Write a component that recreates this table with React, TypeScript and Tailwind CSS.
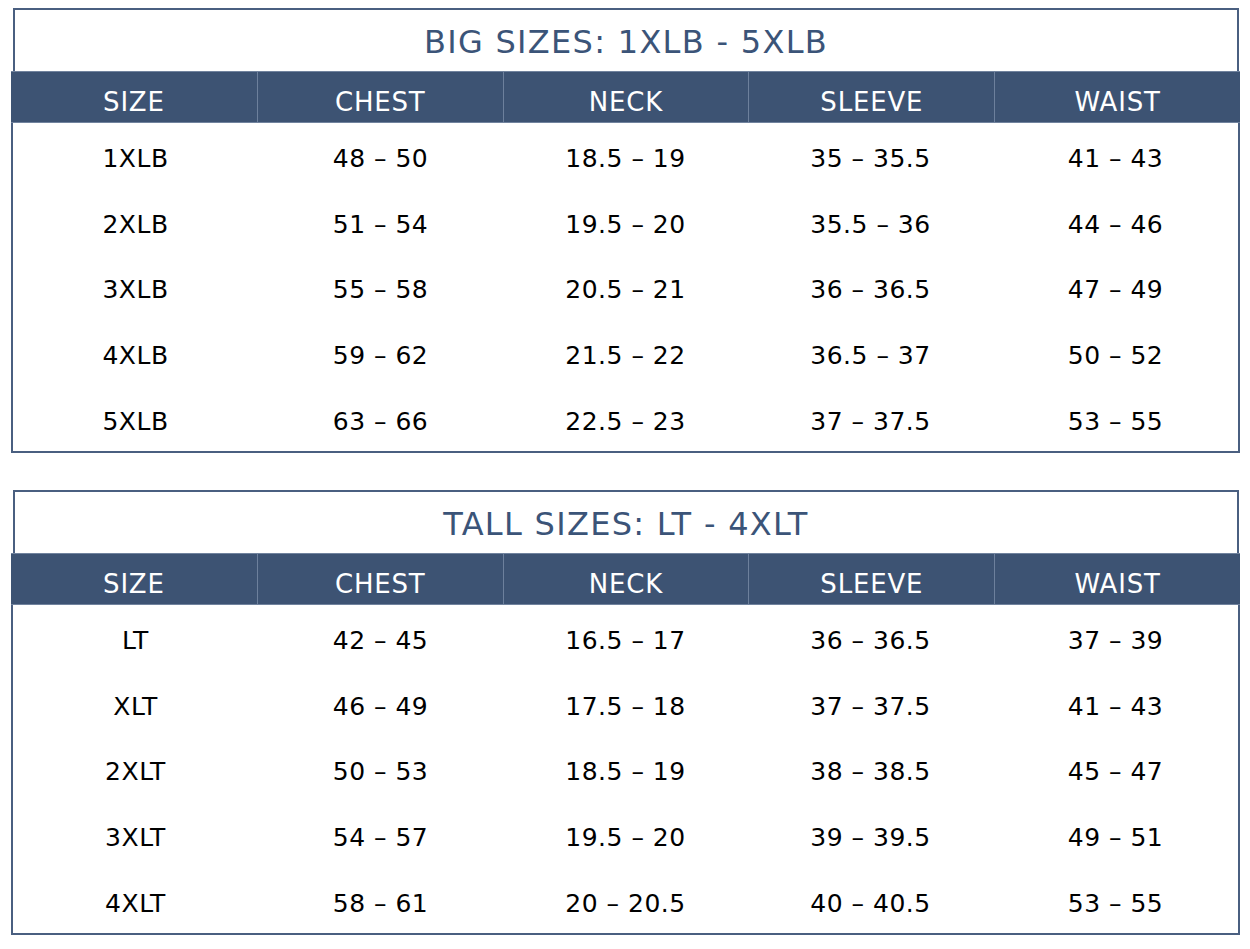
import React from "react";

type Row = [string, string, string, string, string];

const big: Row[] = [
  ["1XLB", "48 – 50", "18.5 – 19", "35 – 35.5", "41 – 43"],
  ["2XLB", "51 – 54", "19.5 – 20", "35.5 – 36", "44 – 46"],
  ["3XLB", "55 – 58", "20.5 – 21", "36 – 36.5", "47 – 49"],
  ["4XLB", "59 – 62", "21.5 – 22", "36.5 – 37", "50 – 52"],
  ["5XLB", "63 – 66", "22.5 – 23", "37 – 37.5", "53 – 55"],
];

const tall: Row[] = [
  ["LT", "42 – 45", "16.5 – 17", "36 – 36.5", "37 – 39"],
  ["XLT", "46 – 49", "17.5 – 18", "37 – 37.5", "41 – 43"],
  ["2XLT", "50 – 53", "18.5 – 19", "38 – 38.5", "45 – 47"],
  ["3XLT", "54 – 57", "19.5 – 20", "39 – 39.5", "49 – 51"],
  ["4XLT", "58 – 61", "20 – 20.5", "40 – 40.5", "53 – 55"],
];

const heads = ["SIZE", "CHEST", "NECK", "SLEEVE", "WAIST"];

function SizeTable({ title, rows }: { title: string; rows: Row[] }) {
  return (
    <div className="flex flex-col">
      <div className="ml-[13px] mr-[11px] h-[63px] border-t-2 border-x-2 border-[#4a5f80] flex items-center justify-center">
        <span className="text-[32px] tracking-[1.3px] text-[#3b5478] leading-none pt-[2px]">{title}</span>
      </div>
      <div className="ml-[11px] mr-[10px] h-[52px] bg-[#3d5373] border-y border-[#71839e] grid grid-cols-5">
        {heads.map((h, i) => (
          <div
            key={h}
            className={
              i === 0
                ? "flex items-center justify-center pt-[9px] text-white text-[26px] tracking-[0.8px] leading-none"
                : "flex items-center justify-center pt-[9px] text-white text-[26px] tracking-[0.8px] leading-none border-l border-[#6d809c]"
            }
          >
            {h}
          </div>
        ))}
      </div>
      <div className="ml-[11px] mr-[10px] h-[330px] border-x-2 border-b-2 border-[#4a5f80] grid grid-rows-5">
        {rows.map((r, ri) => (
          <div key={ri} className="grid grid-cols-5">
            {r.map((c, ci) => (
              <div
                key={ci}
                className="flex items-center justify-center pt-[6px] text-black text-[25px] tracking-[0.5px] leading-none"
              >
                {c}
              </div>
            ))}
          </div>
        ))}
      </div>
    </div>
  );
}

export default function App() {
  return (
    <div
      className="w-[1250px] h-[949px] bg-white pt-[8px] flex flex-col gap-[37px]"
      style={{ fontFamily: "'DejaVu Sans', Verdana, sans-serif" }}
    >
      <SizeTable title="BIG SIZES: 1XLB - 5XLB" rows={big} />
      <SizeTable title="TALL SIZES: LT - 4XLT" rows={tall} />
    </div>
  );
}
